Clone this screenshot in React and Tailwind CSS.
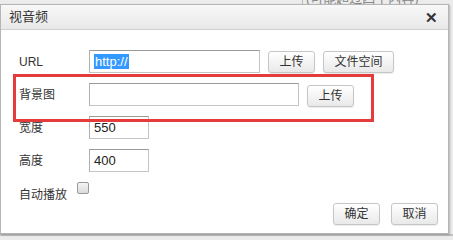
import React from "react";

const font = { fontFamily: '"Liberation Sans", "Noto Sans CJK SC", sans-serif' };

// Grey gradient button used in the dialog
const Btn = ({ children, w = "w-[47px]" }) => (
  <button
    className={`${w} h-[22px] rounded-[3px] border border-[#c6c6c6] bg-gradient-to-b from-[#ffffff] to-[#e9e9e9] text-[12px] leading-none text-[#333] shadow-[0_1px_1px_rgba(0,0,0,0.08)]`}
  >
    {children}
  </button>
);

const Field = ({ w, value, selected }) => (
  <div
    className={`${w} h-[23px] border border-[#c4c4c4] border-t-[#9a9a9a] border-l-[#b0b0b0] bg-white flex items-center pl-[4px] text-[13px] text-[#222]`}
  >
    {selected ? (
      <span className="bg-[#3399ff] text-white px-[1px] leading-[15px]">{value}</span>
    ) : (
      value
    )}
  </div>
);

const Row = ({ label, children, className = "" }) => (
  <div className={`flex items-center h-[23px] ${className}`}>
    <div className="w-[70px] text-[12px] text-[#333]">{label}</div>
    {children}
  </div>
);

export default function App() {
  return (
    <div className="relative w-[453px] h-[240px] overflow-hidden bg-[#ececec]" style={font}>
      {/* page behind the dialog */}
      <div className="absolute left-[302px] top-[-11px] border-l border-[#bbb] pl-[3px] text-[13px] text-[#888]">
        (可能超过四个内容)
      </div>
      <div className="absolute left-0 top-[234px] w-[453px] h-[2px] bg-[#c4c4c4]" />

      {/* dialog */}
      <div className="relative mt-[4px] w-[449px] h-[230px] border border-[#b5b5b5] bg-white shadow-[1px_1px_2px_rgba(0,0,0,0.25)]">
        <div className="flex items-center justify-between h-[25px] border-b border-[#cfcfcf] bg-gradient-to-b from-[#f8f8f8] to-[#e8e8e8] pl-[8px] pr-[10px]">
          <span className="text-[13px] text-[#333]">视音频</span>
          <span className="text-[15px] font-bold leading-none text-[#333]">✕</span>
        </div>

        <div className="flex flex-col gap-[10px] pl-[18px] pt-[20px]">
          <Row label="URL">
            <Field w="w-[171px]" value="http://" selected />
            <div className="ml-[8px] flex gap-[8px]">
              <Btn>上传</Btn>
              <Btn w="w-[71px]">文件空间</Btn>
            </div>
          </Row>
          <Row label="背景图">
            <Field w="w-[210px]" value="" />
            <div className="ml-[8px]">
              <Btn>上传</Btn>
            </div>
          </Row>
          <Row label="宽度">
            <Field w="w-[60px]" value="550" />
          </Row>
          <Row label="高度">
            <Field w="w-[60px]" value="400" />
          </Row>
          <div className="flex items-start h-[23px]">
            <span className="mt-[4px] text-[12px] text-[#333]">自动播放</span>
            <span className="ml-[10px] w-[12px] h-[12px] rounded-[2px] border border-[#999] bg-gradient-to-b from-[#f4f4f4] to-[#dcdcdc]" />
          </div>
        </div>

        <div className="absolute right-[10px] top-[198px] flex gap-[11px]">
          <Btn>确定</Btn>
          <Btn>取消</Btn>
        </div>

        {/* red annotation box */}
        <div className="absolute left-[12px] top-[69px] w-[361px] h-[48px] border-[3px] border-[#e53b3b]" />
      </div>
    </div>
  );
}
